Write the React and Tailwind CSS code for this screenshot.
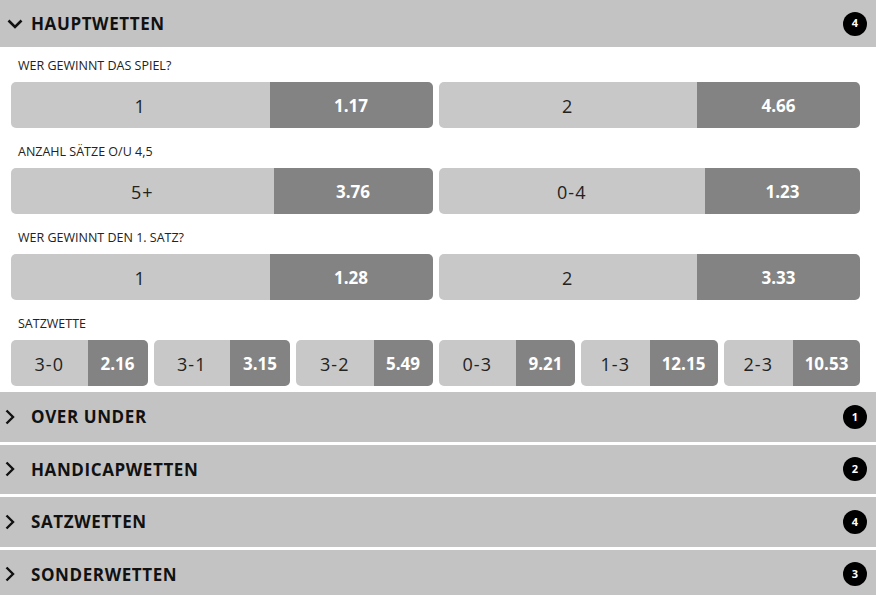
const groups = [
  {
    label: 'WER GEWINNT DAS SPIEL?',
    cols: 2,
    bets: [
      { name: '1', odd: '1.17', w: 163 },
      { name: '2', odd: '4.66', w: 163 },
    ],
  },
  {
    label: 'ANZAHL SÄTZE O/U 4,5',
    cols: 2,
    bets: [
      { name: '5+', odd: '3.76', w: 159 },
      { name: '0-4', odd: '1.23', w: 155 },
    ],
  },
  {
    label: 'WER GEWINNT DEN 1. SATZ?',
    cols: 2,
    bets: [
      { name: '1', odd: '1.28', w: 163 },
      { name: '2', odd: '3.33', w: 163 },
    ],
  },
  {
    label: 'SATZWETTE',
    cols: 6,
    bets: [
      { name: '3-0', odd: '2.16', w: 60 },
      { name: '3-1', odd: '3.15', w: 60 },
      { name: '3-2', odd: '5.49', w: 59 },
      { name: '0-3', odd: '9.21', w: 59 },
      { name: '1-3', odd: '12.15', w: 68 },
      { name: '2-3', odd: '10.53', w: 67 },
    ],
  },
];

const sections = [
  { title: 'OVER UNDER', count: 1 },
  { title: 'HANDICAPWETTEN', count: 2 },
  { title: 'SATZWETTEN', count: 4 },
  { title: 'SONDERWETTEN', count: 3 },
];

const font = { fontFamily: '"Open Sans", "Noto Sans", sans-serif' };

const ChevronDown = () => (
  <svg width="16" height="10" viewBox="0 0 16 10" className="ml-[7px] mr-[8px]">
    <path d="M1.5 1.5 L8 8 L14.5 1.5" fill="none" stroke="#111" strokeWidth="2.6" />
  </svg>
);

const ChevronRight = () => (
  <svg width="10" height="16" viewBox="0 0 10 16" className="ml-[5px] mr-[16px]">
    <path d="M1.5 1.5 L8 8 L1.5 14.5" fill="none" stroke="#111" strokeWidth="2.4" />
  </svg>
);

const Badge = ({ n }) => (
  <div className="w-[24px] h-[24px] rounded-full bg-black text-white flex items-center justify-center text-[11px] font-bold">
    {n}
  </div>
);

const Bet = ({ bet }) => (
  <div className="flex h-[46px] rounded-[5px] overflow-hidden">
    <div className="flex-1 bg-[#c8c8c8] flex items-center justify-center pt-[2px] text-[18px] tracking-[1px] text-[#222]">
      {bet.name}
    </div>
    <div
      className="bg-[#838383] flex items-center justify-center pt-[2px] text-[17px] font-bold text-white"
      style={{ width: bet.w }}
    >
      {bet.odd}
    </div>
  </div>
);

export default function App() {
  return (
    <div className="w-[876px] h-[595px] overflow-hidden bg-white" style={font}>
      <div className="h-[47px] bg-[#c3c3c3] flex items-center pr-[9px]">
        <ChevronDown />
        <span className="text-[17px] font-bold tracking-[0.6px] text-[#111]">HAUPTWETTEN</span>
        <div className="ml-auto">
          <Badge n={4} />
        </div>
      </div>

      <div className="pl-[11px] pr-[16px] pt-[11px] pb-[6px]">
        {groups.map((g, i) => (
          <div key={g.label} className={i > 0 ? 'mt-[16px]' : ''}>
            <div className="h-[16px] leading-[16px] text-[12.5px] text-[#222] pl-[7px] mb-[8px]">
              {g.label}
            </div>
            <div className={g.cols === 2 ? 'grid grid-cols-2 gap-[6px]' : 'grid grid-cols-6 gap-[6px]'}>
              {g.bets.map((b) => (
                <Bet key={b.name + b.odd} bet={b} />
              ))}
            </div>
          </div>
        ))}
      </div>

      {sections.map((s, i) => (
        <div
          key={s.title}
          className={`h-[49.5px] bg-[#c3c3c3] flex items-center pr-[9px] ${i > 0 ? 'mt-[3px]' : ''}`}
        >
          <ChevronRight />
          <span className="text-[17px] font-bold tracking-[0.6px] text-[#111]">{s.title}</span>
          <div className="ml-auto">
            <Badge n={s.count} />
          </div>
        </div>
      ))}
    </div>
  );
}
